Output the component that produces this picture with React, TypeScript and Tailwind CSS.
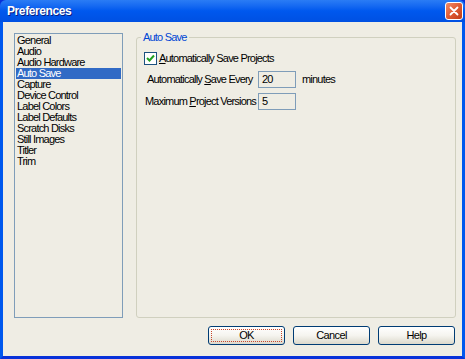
import { useState } from "react";

const PAGES = [
  "General",
  "Audio",
  "Audio Hardware",
  "Auto Save",
  "Capture",
  "Device Control",
  "Label Colors",
  "Label Defaults",
  "Scratch Disks",
  "Still Images",
  "Titler",
  "Trim",
];

function XpButton({ label, focused }: { label: string; focused?: boolean }) {
  return (
    <button className="h-[19px] w-[77px] rounded-[3px] border border-[#003C74] bg-gradient-to-b from-[#FFFFFF] via-[#F5F4EF] to-[#DCD9CC] p-[2px] text-[11px] leading-none tracking-[-0.6px] text-black">
      <span
        className={
          "flex h-full w-full items-center justify-center " +
          (focused ? "border border-dotted border-[#C8452B]" : "border border-transparent")
        }
      >
        {label}
      </span>
    </button>
  );
}

export default function App() {
  const [selected, setSelected] = useState(3);
  const [autoSave, setAutoSave] = useState(true);

  return (
    <div
      className="flex h-[359px] w-[465px] flex-col overflow-hidden bg-[#0831D9] text-black"
      style={{ fontFamily: '"Liberation Sans", Arial, sans-serif' }}
    >
      {/* Title bar */}
      <div className="flex h-[22px] shrink-0 items-center justify-between rounded-t-[6px] bg-gradient-to-b from-[#2A7CF5] via-[#0058EE] to-[#0050E2] pl-[7px] pr-[2px]">
        <span className="text-[12px] font-bold tracking-[-0.4px] text-white [text-shadow:1px_1px_0_#0A1E80]">
          Preferences
        </span>
        <div className="flex h-[18px] w-[18px] items-center justify-center rounded-[3px] border border-white bg-gradient-to-br from-[#F08A68] via-[#E05A32] to-[#C03A14]">
          <svg width="10" height="10" viewBox="0 0 10 10">
            <path d="M1.5 1.5 L8.5 8.5 M8.5 1.5 L1.5 8.5" stroke="white" strokeWidth="1.8" strokeLinecap="round" />
          </svg>
        </div>
      </div>

      {/* Window frame */}
      <div className="flex flex-1 flex-col border-x-[3px] border-b-[3px] border-x-[#0058EE] border-b-[#0831D9]">
        <div className="flex flex-1 flex-col bg-[#EFEDE4] pl-[11px] pt-[11px] text-[11px] tracking-[-0.8px]">
          <div className="flex items-start">
            {/* Page list */}
            <div className="h-[285px] w-[109px] shrink-0 border border-[#7F9DB9] bg-[#EFEDE4] p-[1px]">
              {PAGES.map((page, i) => (
                <div
                  key={page}
                  onClick={() => setSelected(i)}
                  className={
                    "h-[11px] whitespace-nowrap pl-[1px] leading-[11px] " +
                    (i === selected ? "bg-[#316AC5] text-white" : "text-black")
                  }
                >
                  {page}
                </div>
              ))}
            </div>

            {/* Auto Save group */}
            <div className="relative ml-[13px] mt-[4px] h-[281px] w-[320px] rounded-[3px] border border-[#D0D0BF]">
              <span className="absolute left-[4px] top-[-7px] whitespace-nowrap bg-[#EFEDE4] px-[2px] leading-[12px] text-[#0046D5]">
                Auto Save
              </span>

              <div className="flex flex-col whitespace-nowrap pl-[7px] pt-[12px]">
                <label className="flex items-center gap-[2px]">
                  <span
                    onClick={() => setAutoSave(!autoSave)}
                    className="flex h-[13px] w-[13px] items-center justify-center border border-[#1C5180] bg-white"
                  >
                    {autoSave && (
                      <svg width="9" height="9" viewBox="0 0 9 9">
                        <path d="M1 4 L3.5 6.5 L8 1.5" fill="none" stroke="#21A121" strokeWidth="2" />
                      </svg>
                    )}
                  </span>
                  <span>
                    <span className="underline">A</span>utomatically Save Projects
                  </span>
                </label>

                <div className="mt-[4px] flex items-center">
                  <span className="w-[114px] pl-[3px]">
                    Automatically <span className="underline">S</span>ave Every
                  </span>
                  <div className="flex h-[17px] w-[38px] items-center border border-[#7F9DB9] pl-[3px]">20</div>
                  <span className="ml-[6px]">minutes</span>
                </div>

                <div className="mt-[5px] flex items-center">
                  <span className="w-[114px] pl-[1px]">
                    Maximum <span className="underline">P</span>roject Versions
                  </span>
                  <div className="flex h-[17px] w-[38px] items-center border border-[#7F9DB9] pl-[3px]">5</div>
                </div>
              </div>
            </div>
          </div>

          {/* Buttons */}
          <div className="mt-[8px] flex justify-end gap-[8px] pr-[7px]">
            <XpButton label="OK" focused />
            <XpButton label="Cancel" />
            <XpButton label="Help" />
          </div>
        </div>
      </div>
    </div>
  );
}
